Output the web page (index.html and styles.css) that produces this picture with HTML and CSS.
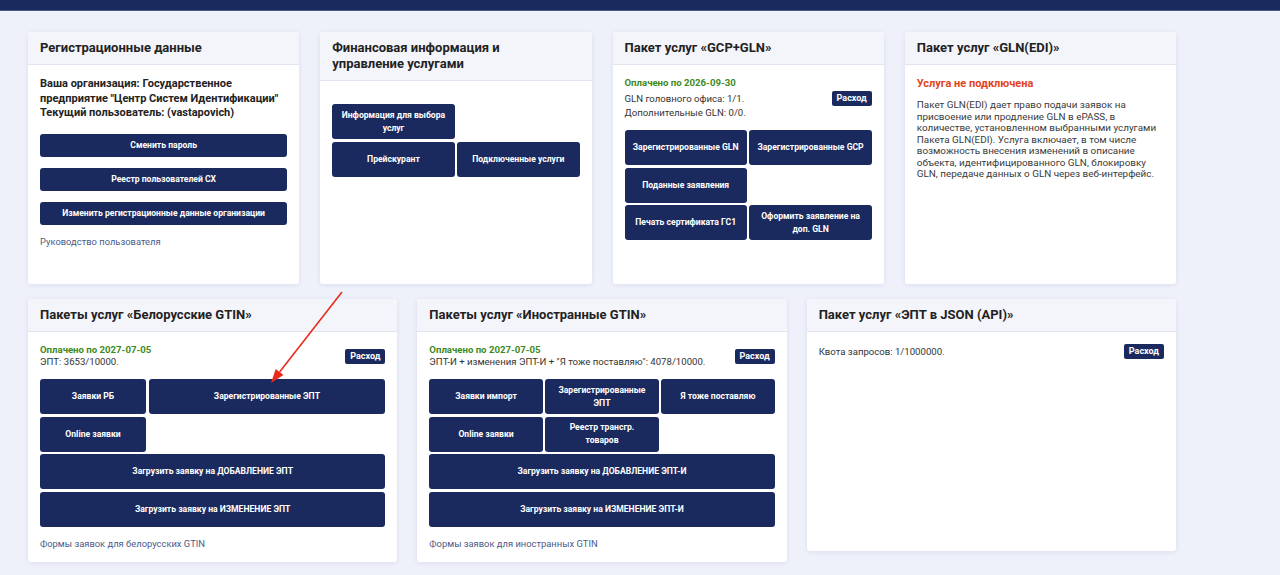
FILE: index.html
```html
<!DOCTYPE html>
<html lang="ru">
<head>
    <meta charset="UTF-8">
    <title>Личный кабинет</title>
    <link rel="stylesheet" href="styles.css">
</head>
<body>
<div class="topbar"></div>
<div class="page">
    <div class="row row4">
        <div class="card">
            <div class="card-head">Регистрационные данные</div>
            <div class="card-body">
                <p class="org">Ваша организация: Государственное предприятие "Центр Систем Идентификации"</p>
                <p class="org">Текущий пользователь: (vastapovich)</p>
                <div class="stack">
                    <a class="btn" href="#">Сменить пароль</a>
                    <a class="btn" href="#">Реестр пользователей СХ</a>
                    <a class="btn" href="#">Изменить регистрационные данные организации</a>
                </div>
                <a class="link" href="#">Руководство пользователя</a>
            </div>
        </div>
        <div class="card">
            <div class="card-head">Финансовая информация и<br>управление услугами</div>
            <div class="card-body">
                <div class="grid cols2 spaced">
                    <a class="btn tile" href="#">Информация для выбора услуг</a>
                    <a class="btn tile first" href="#">Прейскурант</a>
                    <a class="btn tile" href="#">Подключенные услуги</a>
                </div>
            </div>
        </div>
        <div class="card">
            <div class="card-head">Пакет услуг «GCP+GLN»</div>
            <div class="card-body">
                <div class="status">
                    <div class="info">
                        <div class="paid">Оплачено по 2026-09-30</div>
                        <div class="line tall">GLN головного офиса: 1/1.</div>
                        <div class="line">Дополнительные GLN: 0/0.</div>
                    </div>
                    <a class="btn small" href="#">Расход</a>
                </div>
                <div class="grid cols2">
                    <a class="btn tile" href="#">Зарегистрированные GLN</a>
                    <a class="btn tile" href="#">Зарегистрированные GCP</a>
                    <a class="btn tile" href="#">Поданные заявления</a>
                    <a class="btn tile first" href="#">Печать сертификата ГС1</a>
                    <a class="btn tile" href="#">Оформить заявление на доп. GLN</a>
                </div>
            </div>
        </div>
        <div class="card">
            <div class="card-head">Пакет услуг «GLN(EDI)»</div>
            <div class="card-body">
                <div class="off">Услуга не подключена</div>
                <p class="desc">Пакет GLN(EDI) дает право подачи заявок на присвоение или продление GLN в ePASS, в количестве, установленном выбранными услугами Пакета GLN(EDI). Услуга включает, в том числе возможность внесения изменений в описание объекта, идентифицированного GLN, блокировку GLN, передаче данных о GLN через веб-интерфейс.</p>
            </div>
        </div>
    </div>

    <div class="row row3">
        <div class="card">
            <div class="card-head">Пакеты услуг «Белорусские GTIN»</div>
            <div class="card-body">
                <div class="status">
                    <div class="info">
                        <div class="paid">Оплачено по 2027-07-05</div>
                        <div class="line">ЭПТ: 3653/10000.</div>
                    </div>
                    <a class="btn small" href="#">Расход</a>
                </div>
                <div class="grid cols-by">
                    <a class="btn tile" href="#">Заявки РБ</a>
                    <a class="btn tile" href="#">Зарегистрированные ЭПТ</a>
                    <a class="btn tile" href="#">Online заявки</a>
                    <a class="btn tile wide" href="#">Загрузить заявку на ДОБАВЛЕНИЕ ЭПТ</a>
                    <a class="btn tile wide" href="#">Загрузить заявку на ИЗМЕНЕНИЕ ЭПТ</a>
                </div>
                <a class="link" href="#">Формы заявок для белорусских GTIN</a>
            </div>
        </div>
        <div class="card">
            <div class="card-head">Пакеты услуг «Иностранные GTIN»</div>
            <div class="card-body">
                <div class="status">
                    <div class="info">
                        <div class="paid">Оплачено по 2027-07-05</div>
                        <div class="line">ЭПТ-И + изменения ЭПТ-И + "Я тоже поставляю": 4078/10000.</div>
                    </div>
                    <a class="btn small" href="#">Расход</a>
                </div>
                <div class="grid cols3">
                    <a class="btn tile" href="#">Заявки импорт</a>
                    <a class="btn tile" href="#">Зарегистрированные ЭПТ</a>
                    <a class="btn tile" href="#">Я тоже поставляю</a>
                    <a class="btn tile" href="#">Online заявки</a>
                    <a class="btn tile" href="#">Реестр трансгр. товаров</a>
                    <a class="btn tile wide" href="#">Загрузить заявку на ДОБАВЛЕНИЕ ЭПТ-И</a>
                    <a class="btn tile wide" href="#">Загрузить заявку на ИЗМЕНЕНИЕ ЭПТ-И</a>
                </div>
                <a class="link" href="#">Формы заявок для иностранных GTIN</a>
            </div>
        </div>
        <div class="card">
            <div class="card-head">Пакет услуг «ЭПТ в JSON (API)»</div>
            <div class="card-body">
                <div class="status">
                    <div class="line">Квота запросов: 1/1000000.</div>
                    <a class="btn small" href="#">Расход</a>
                </div>
            </div>
        </div>
    </div>
</div>

<!-- красная стрелка-пометка поверх страницы -->
<svg class="marker" width="1280" height="575" viewBox="0 0 1280 575">
    <line x1="342" y1="292" x2="279.6" y2="372" stroke="#ec2a1c" stroke-width="1.6"/>
    <polygon points="271,383 283.5,375.1 275.7,368.9" fill="#ec2a1c"/>
</svg>
</body>
</html>
```

FILE: styles.css
```css
body{
    margin:0;
    background-color:#eef1fa;
    font-family:Roboto,"Noto Sans","Liberation Sans",sans-serif;
    color:#222;
}
.topbar{
    height:10px;
    background-color:#1b2a5e;
    border-bottom:1px solid #4c5a86;
}
.page{
    width:1148px;
    padding:21px 28px 0;
}
.row{
    display:grid;
    align-items:start;
    margin-bottom:15px;
}
.row4{
    grid-template-columns:repeat(4,1fr);
    column-gap:21px;
    align-items:stretch;
}
.row3{
    grid-template-columns:repeat(3,1fr);
    column-gap:20px;
}
.card{
    background-color:#fff;
    border-radius:3px;
    box-shadow:0 1px 5px rgba(60,70,140,0.10);
    min-height:252px;
    display:flex;
    flex-direction:column;
}
.card-head{
    background-color:#f4f5fb;
    border-bottom:1px solid #e1e4ef;
    border-radius:3px 3px 0 0;
    padding:8px 12px;
    font-size:13px;
    line-height:16px;
    font-weight:bold;
    color:#222;
}
.card-body{
    padding:12px 12px 11px 12px;
}
.org{
    margin:0;
    font-size:11px;
    line-height:14.5px;
    font-weight:bold;
}
.stack{
    display:flex;
    flex-direction:column;
    gap:11px;
    margin:13px 0 10px;
}
.btn{
    display:flex;
    align-items:center;
    justify-content:center;
    text-align:center;
    background-color:#1b2a5e;
    color:#fff;
    text-decoration:none;
    font-size:8.6px;
    font-weight:bold;
    line-height:13px;
    border-radius:3px;
    height:23px;
}
.link{
    display:block;
    font-size:9.4px;
    line-height:14px;
    color:#4b5a88;
    text-decoration:none;
}
/* сетка кнопок-плиток */
.grid{
    display:grid;
    gap:2.5px;
    margin-bottom:10px;
}
.grid.spaced{
    margin-top:11px;
}
.cols2{
    grid-template-columns:1fr 1fr;
}
.cols3{
    grid-template-columns:repeat(3,1fr);
}
.cols-by{
    grid-template-columns:106px 1fr;
}
.tile{
    height:35px;
    padding:0 7px;
}
.cols3 .tile{
    padding:0 10px;
}
.first{
    grid-column-start:1;
}
.wide{
    grid-column:1 / -1;
}
.status{
    display:flex;
    align-items:center;
    justify-content:space-between;
    margin-bottom:11px;
}
.paid{
    color:#3d8a22;
    font-size:9.6px;
    font-weight:bold;
    line-height:12px;
}
.line{
    font-size:9.6px;
    line-height:12px;
    color:#333;
}
.line.tall{
    margin-top:4px;
    margin-bottom:2px;
}
.btn.small{
    height:15px;
    padding:0 5px;
    border-radius:2px;
    font-size:9px;
}
.off{
    color:#e2431e;
    font-size:11px;
    font-weight:bold;
    line-height:14px;
}
.desc{
    margin:8px 0 0;
    font-size:9.9px;
    line-height:11.5px;
    color:#3a3a3a;
}
.marker{
    position:absolute;
    left:0;
    top:0;
    pointer-events:none;
}
```
